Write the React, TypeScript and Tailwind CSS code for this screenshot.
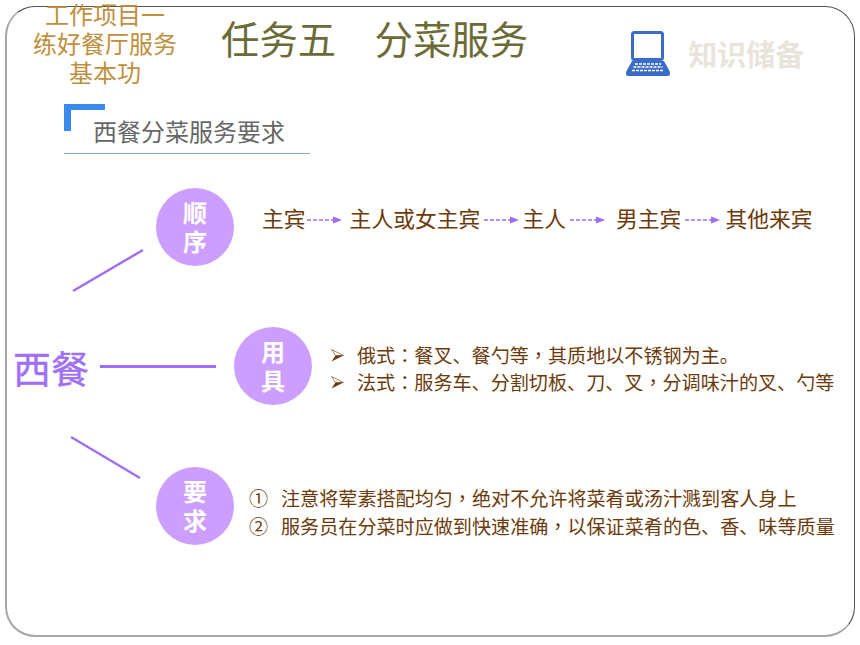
const cjk = "font-['Microsoft_YaHei','Noto_Sans_CJK_SC',sans-serif]";

function Arrow({ className }: { className: string }) {
  return (
    <svg className={className} width="35" height="10" viewBox="0 0 35 10">
      <line x1="0" y1="5" x2="27" y2="5" stroke="#9b6cf5" strokeWidth="1.5" strokeDasharray="4 2" />
      <path d="M26 1.5 L35 5 L26 8.5 Z" fill="#9b6cf5" />
    </svg>
  );
}

function Circle({ top, bottom, className }: { top: string; bottom: string; className?: string }) {
  return (
    <div className={`w-[78px] h-[78px] shrink-0 rounded-full bg-[#cc9eff] flex flex-col items-center justify-center pb-[3px] text-white font-bold text-[24px] leading-[29px] ${className ?? ""}`}>
      <span>{top}</span>
      <span>{bottom}</span>
    </div>
  );
}

// centred punctuation, as in the slide
function P({ children }: { children: string }) {
  return <span className="font-['Noto_Sans_CJK_TC',sans-serif]">{children}</span>;
}

function Bullet() {
  return (
    <svg className="shrink-0 mt-[7px] mr-[13px]" width="13" height="13" viewBox="0 0 13 13">
      <path d="M0.5 0.5 L12.5 6.5 H4.5 Z" fill="white" stroke="#8a6a48" strokeWidth="0.8" strokeLinejoin="round" />
      <path d="M4.5 6.5 H12.5 L0.5 12.5 Z" fill="#6b3a0a" />
    </svg>
  );
}

function Laptop() {
  return (
    <svg width="44" height="45" viewBox="0 0 44 45">
      <rect x="6.5" y="1.5" width="30" height="27" rx="2" fill="white" stroke="#3a6cc9" strokeWidth="3" />
      <path d="M6 30 H38 L44 41 V43 Q44 45 42 45 H2 Q0 45 0 43 V41 Z" fill="#3a6cc9" />
      <path d="M9 33 H35 M7.5 36 H36.5 M6 39.5 H38" stroke="white" strokeWidth="1.6" strokeDasharray="3 1" />
    </svg>
  );
}

export default function App() {
  return (
    <div className={`relative w-[860px] h-[645px] bg-white pt-[6px] pl-[5px] overflow-hidden ${cjk}`}>
      <div className="w-[850px] h-[631px] rounded-[30px] border-2 border-[#a6a6a6] border-t-[#555555] border-t-[1px] border-r-[#555555] border-r-[1px] bg-white">
        {/* header */}
        <div className="flex items-start h-[90px]">
          <div className="w-[196px] -mt-[8px] text-center text-[24px] leading-[29px] text-[#c08f3e]">
            <div>工作项目一</div>
            <div>练好餐厅服务</div>
            <div>基本功</div>
          </div>
          <div className="ml-[18px] mt-[2px] text-[38.4px] leading-[56px] text-[#6b6b35] whitespace-pre">任务五　分菜服务</div>
          <div className="ml-[98px] mt-[24px]"><Laptop /></div>
          <div className="ml-[18px] mt-[25px] text-[29px] leading-[42px] font-bold text-[#e8e4dc]">知识储备</div>
        </div>

        {/* section heading */}
        <div className="ml-[57px] w-[246px] h-[57px] border-b border-[#7ea6dd] relative">
          <div className="absolute left-0 top-[7px] w-[41px] h-[27px] border-l-[7px] border-t-[6px] border-[#3b8bee]" />
          <div className="pt-[16px] pl-[29px] text-[24px] leading-[36px] text-[#666666]">西餐分菜服务要求</div>
        </div>

        {/* order */}
        <div className="flex items-center mt-[34px] ml-[149px] text-[21.8px] leading-[32px] text-[#6b3a0a]">
          <Circle top="顺" bottom="序" />
          <span className="ml-[28px] mb-[18px]">主宾</span>
          <Arrow className="ml-[1px] mb-[14px]" />
          <span className="ml-[8px] mb-[18px]">主人或女主宾</span>
          <Arrow className="ml-[4px] mb-[14px]" />
          <span className="ml-[3px] mb-[18px]">主人</span>
          <Arrow className="ml-[4px] mb-[14px]" />
          <span className="ml-[11px] mb-[18px]">男主宾</span>
          <Arrow className="ml-[4px] mb-[14px]" />
          <span className="ml-[5px] mb-[18px]">其他来宾</span>
        </div>

        {/* tools */}
        <div className="flex items-center mt-[61px] ml-[6px] h-[78px] text-[19.1px] leading-[27px] text-[#6b3a0a]">
          <span className="w-[87px] text-[38px] leading-[46px] [-webkit-text-stroke:0.4px_#a06ff8] text-[#a06ff8] mt-[2px]">西餐</span>
          <div className="w-[116px] h-[3px] bg-[#a06ff8] shrink-0 mt-[1px]" />
          <Circle top="用" bottom="具" className="ml-[18px]" />
          <div className="ml-[19px] mt-[6px]">
            <div className="flex whitespace-nowrap">
              <Bullet />
              <span>俄式<P>：</P>餐叉、餐勺等<P>，</P>其质地以不锈钢为主。</span>
            </div>
            <div className="flex whitespace-nowrap">
              <Bullet />
              <span>法式<P>：</P>服务车、分割切板、刀、叉<P>，</P>分调味汁的叉、勺等</span>
            </div>
          </div>
        </div>

        {/* requirements */}
        <div className="flex items-center mt-[62px] ml-[149px] h-[78px] text-[19.1px] leading-[28px] text-[#6b3a0a]">
          <Circle top="要" bottom="求" />
          <div className="ml-[15px] mt-[12px]">
            <div className="flex whitespace-nowrap">
              <span className="w-[32px]">①</span>
              <span>注意将荤素搭配均匀<P>，</P>绝对不允许将菜肴或汤汁溅到客人身上</span>
            </div>
            <div className="flex whitespace-nowrap">
              <span className="w-[32px]">②</span>
              <span>服务员在分菜时应做到快速准确<P>，</P>以保证菜肴的色、香、味等质量</span>
            </div>
          </div>
        </div>
      </div>

      {/* diagonal connectors */}
      <svg className="absolute left-0 top-0 pointer-events-none" width="860" height="645">
        <line x1="73" y1="291" x2="143" y2="250" stroke="#a06ff8" strokeWidth="2.5" />
        <line x1="71" y1="437" x2="140" y2="478" stroke="#a06ff8" strokeWidth="2.5" />
      </svg>
    </div>
  );
}
